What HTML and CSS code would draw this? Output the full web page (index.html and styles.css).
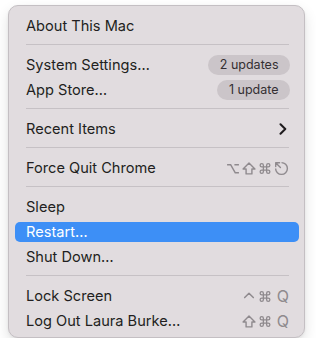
FILE: index.html
```html
<!DOCTYPE html>
<html>
<head>
<meta charset="utf-8">
<link rel="stylesheet" href="styles.css">
</head>
<body>
<div class="menu">
  <div class="item"><span class="label">About This Mac</span></div>
  <div class="sep"></div>
  <div class="item"><span class="label">System Settings…</span><span class="badge">2 updates</span></div>
  <div class="item"><span class="label">App Store…</span><span class="badge">1 update</span></div>
  <div class="sep"></div>
  <div class="item"><span class="label">Recent Items</span>
    <svg class="chev" width="8" height="12" viewBox="0 0 8 12"><path d="M1.5 1.2 L6.3 6 L1.5 10.8" fill="none" stroke="#1f1c1e" stroke-width="2" stroke-linecap="round" stroke-linejoin="round"/></svg>
  </div>
  <div class="sep"></div>
  <div class="item"><span class="label">Force Quit Chrome</span>
    <span class="keys">
      <svg width="14" height="13" viewBox="0 0 13 12"><path d="M1 2.5 H4.3 L8.6 10 H12 M7.8 2.5 H12" fill="none" stroke="#8f8a8e" stroke-width="1.4"/></svg>
      <svg width="14" height="13" viewBox="0 0 13 12"><path d="M6.5 1 L12 6.5 H9.2 V11 H3.8 V6.5 H1 Z" fill="none" stroke="#8f8a8e" stroke-width="1.3" stroke-linejoin="round"/></svg>
      <svg width="14" height="13" viewBox="0 0 12 12"><path d="M4.5 4.5 V3 A1.5 1.5 0 1 0 3 4.5 H9 A1.5 1.5 0 1 0 7.5 3 V9 A1.5 1.5 0 1 0 9 7.5 H3 A1.5 1.5 0 1 0 4.5 9 Z" fill="none" stroke="#8f8a8e" stroke-width="1.2"/></svg>
      <svg width="15" height="15" viewBox="0 0 14 14"><path d="M7 1.5 A5.5 5.5 0 1 1 1.5 7" fill="none" stroke="#8f8a8e" stroke-width="1.3"/><path d="M1.6 5.2 V1.6 H5.2 M1.8 1.8 L6 6" fill="none" stroke="#8f8a8e" stroke-width="1.3" stroke-linecap="round" stroke-linejoin="round"/></svg>
    </span>
  </div>
  <div class="sep"></div>
  <div class="item"><span class="label">Sleep</span></div>
  <div class="item active"><span class="label">Restart…</span></div>
  <div class="item"><span class="label">Shut Down…</span></div>
  <div class="sep"></div>
  <div class="item"><span class="label">Lock Screen</span>
    <span class="keys">
      <svg width="14" height="13" viewBox="0 0 13 12"><path d="M2.5 7 L6.5 3 L10.5 7" fill="none" stroke="#8f8a8e" stroke-width="1.4" stroke-linecap="round" stroke-linejoin="round"/></svg>
      <svg width="14" height="13" viewBox="0 0 12 12"><path d="M4.5 4.5 V3 A1.5 1.5 0 1 0 3 4.5 H9 A1.5 1.5 0 1 0 7.5 3 V9 A1.5 1.5 0 1 0 9 7.5 H3 A1.5 1.5 0 1 0 4.5 9 Z" fill="none" stroke="#8f8a8e" stroke-width="1.2"/></svg>
      <span class="q">Q</span>
    </span>
  </div>
  <div class="item"><span class="label">Log Out Laura Burke…</span>
    <span class="keys">
      <svg width="14" height="13" viewBox="0 0 13 12"><path d="M6.5 1 L12 6.5 H9.2 V11 H3.8 V6.5 H1 Z" fill="none" stroke="#8f8a8e" stroke-width="1.3" stroke-linejoin="round"/></svg>
      <svg width="14" height="13" viewBox="0 0 12 12"><path d="M4.5 4.5 V3 A1.5 1.5 0 1 0 3 4.5 H9 A1.5 1.5 0 1 0 7.5 3 V9 A1.5 1.5 0 1 0 9 7.5 H3 A1.5 1.5 0 1 0 4.5 9 Z" fill="none" stroke="#8f8a8e" stroke-width="1.2"/></svg>
      <span class="q">Q</span>
    </span>
  </div>
</div>
</body>
</html>
```
FILE: styles.css
```css
html, body {
  margin: 0;
  padding: 0;
  background: #ffffff;
}
body {
  font-family: "Inter", "Liberation Sans", sans-serif;
  font-size: 14.6px;
  color: #221f21;
}
.menu {
  box-sizing: border-box;
  margin: 5px 0 0 8px;
  width: 297px;
  height: 333px;
  display: flex;
  flex-direction: column;
  background: #e1dcdf;
  border: 1px solid #c4bfc3;
  border-radius: 10px;
  padding: 6px 5px 5px 6px;
  box-shadow: 0 6px 14px rgba(0,0,0,0.12), 0 1px 3px rgba(0,0,0,0.06);
}
.item {
  box-sizing: border-box;
  flex: none;
  height: 20px;
  margin: 4px 0 1px;
  padding: 0 10px 0 11px;
  display: flex;
  align-items: center;
  justify-content: space-between;
  border-radius: 5px;
  line-height: 17px;
}
.item.active {
  background: #3d8ff6;
  color: #ffffff;
}
.sep {
  flex: none;
  height: 14px;
  display: flex;
  align-items: center;
  padding: 0 10px 0 11px;
}
.sep::before {
  content: "";
  display: block;
  flex: 1;
  height: 1px;
  background: #c6c1c5;
}
.badge {
  box-sizing: border-box;
  height: 20px;
  margin-right: -1px;
  padding: 0 11.5px;
  border-radius: 10px;
  background: #cbc5c9;
  color: #332f32;
  font-size: 12.5px;
  line-height: 20px;
}
.chev {
  margin-right: 2px;
}
.keys {
  display: flex;
  align-items: center;
  gap: 2px;
  color: #8f8a8e;
}
.keys svg {
  display: block;
}
.q {
  font-size: 16px;
  margin-left: 3px;
  color: #8f8a8e;
}
```
